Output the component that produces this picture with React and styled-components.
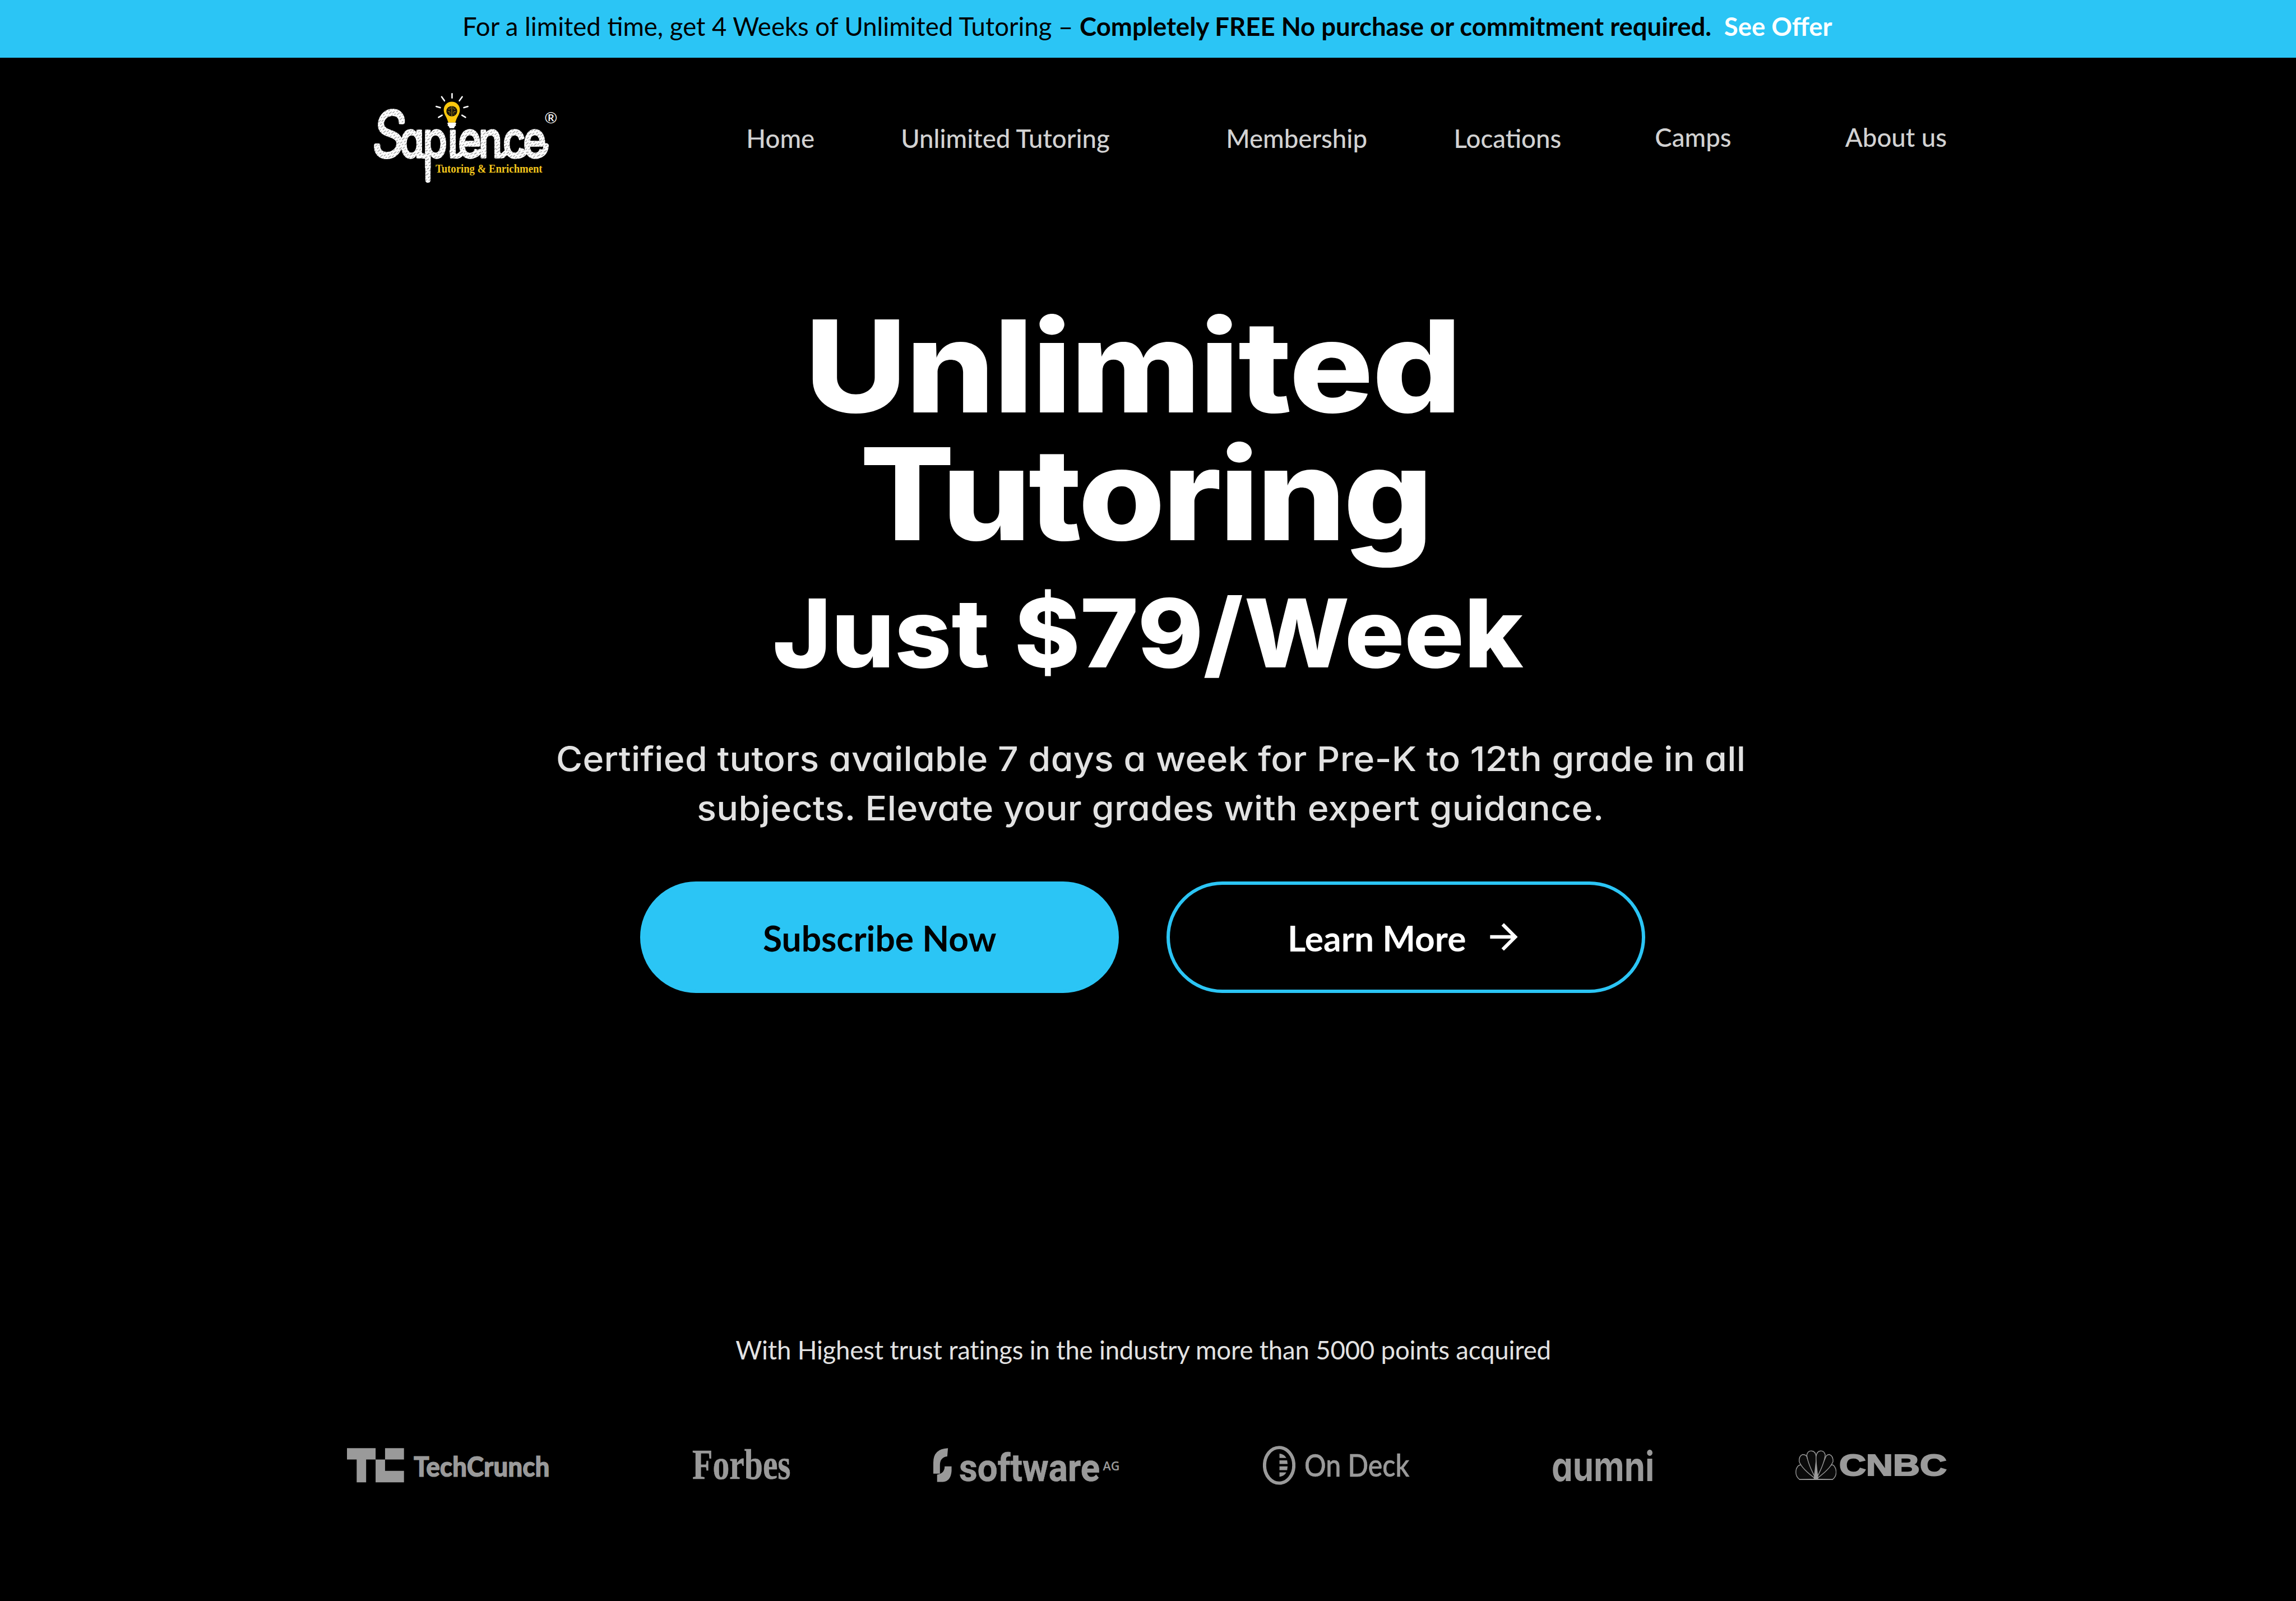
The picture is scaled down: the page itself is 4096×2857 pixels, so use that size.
import React from "react";
import styled, { createGlobalStyle } from "styled-components";

/* The design is laid out on a 4853px artboard and drawn at 0.844 scale. */
const u = (n) => `${(n * 0.84401).toFixed(2)}px`;

const CYAN = "#2bc5f5";
const GREY = "#9a9a9a";

const lato = `Lato, "Open Sans", sans-serif`;
const inter = `Inter, "Open Sans", sans-serif`;

const GlobalStyle = createGlobalStyle`
  html, body { margin: 0; padding: 0; background: #000; }
  * { box-sizing: border-box; }
`;

const Page = styled.div`
  display: flex;
  flex-direction: column;
  width: ${u(4853)};
  height: ${u(3385)};
  overflow: hidden;
  background: #000;
  font-family: ${lato};
`;

const Banner = styled.div`
  display: flex;
  align-items: center;
  flex: none;
  height: ${u(121.6)};
  padding: 0 0 ${u(11.6)} ${u(977.6)};
  background: ${CYAN};
  color: #000;
  font-size: ${u(53.9)};
  white-space: pre;
`;

const Strong = styled.strong`
  font-weight: 700;
`;

const OfferLink = styled.a`
  margin-left: ${u(27)};
  color: #fff;
  font-weight: 700;
`;

const Header = styled.header`
  display: flex;
  align-items: center;
  flex: none;
  height: ${u(341)};
  padding-left: ${u(760)};
`;

const BrandMark = styled.svg`
  flex: none;
  width: ${u(450)};
  height: ${u(230)};
  margin-top: ${u(6)};
`;

const Nav = styled.nav`
  display: grid;
  grid-template-columns: ${[326.8, 687.2, 481.5, 425.2, 402.2].map(u).join(" ")} auto;
  align-items: center;
  margin-left: ${u(367.4)};
`;

const NavLink = styled.a`
  padding-bottom: ${(p) => u(p.$lift || 0)};
  color: #d2d2d2;
  font-size: ${u(54)};
  font-weight: 500;
  white-space: nowrap;
`;

const Hero = styled.main`
  display: flex;
  flex-direction: column;
  align-items: center;
  flex: none;
`;

const Title = styled.h1`
  display: flex;
  flex-direction: column;
  align-items: center;
  margin: ${u(177.6)} 0 0;
  color: #fff;
  font-family: ${inter};
  font-weight: 800;
  font-feature-settings: "cv11" 1;
`;

const TitleLine = styled.span`
  display: flex;
  gap: ${(p) => u(p.$gap || 0)};
  margin-top: ${(p) => u(p.$top || 0)};
  margin-right: ${(p) => u(p.$right || 0)};
  font-size: ${(p) => u(p.$size)};
  line-height: ${(p) => u(p.$line)};
  letter-spacing: ${(p) => u(p.$track || 0)};
  white-space: nowrap;
  transform: scaleX(${(p) => p.$stretch});
`;

const Lead = styled.p`
  display: flex;
  flex-direction: column;
  align-items: center;
  margin: ${u(92.9)} 0 0 ${u(11)};
  color: #e2e2e2;
  font-family: ${inter};
  font-size: ${u(72)};
  font-weight: 500;
  line-height: ${u(105)};
  font-feature-settings: "cv11" 1;
`;

const LeadLine = styled.span`
  letter-spacing: ${(p) => u(p.$track)};
  white-space: nowrap;
  transform: scaleX(1.06);
`;

const Actions = styled.div`
  display: flex;
  gap: ${u(101)};
  margin: ${u(101.3)} ${u(22)} 0 0;
`;

const Button = styled.button`
  display: flex;
  align-items: center;
  justify-content: center;
  gap: ${u(35.6)};
  width: ${u(1011.6)};
  height: ${u(236)};
  padding: 0;
  border: ${u(7.2)} solid ${CYAN};
  border-radius: ${u(118)};
  background: ${(p) => (p.$filled ? CYAN : "transparent")};
  color: ${(p) => (p.$filled ? "#000" : "#fff")};
  font-family: ${lato};
  font-size: ${u(73.8)};
  font-weight: 700;
`;

const ButtonLabel = styled.span`
  padding-top: ${u(4)};
`;

const ArrowIcon = styled.svg`
  width: ${u(87.5)};
  height: ${u(87.5)};
  fill: currentColor;
`;

const Trust = styled.p`
  margin: ${u(714.5)} ${u(20)} 0 0;
  color: #e2e2e2;
  font-size: ${u(54)};
  line-height: ${u(80)};
  letter-spacing: ${u(-0.25)};
  white-space: nowrap;
`;

const LogoRow = styled.section`
  display: flex;
  justify-content: space-between;
  flex: none;
  width: ${u(3381)};
  height: ${u(105)};
  margin: ${u(146.2)} 0 0 ${u(733.8)};
  color: ${GREY};
`;

const Logo = styled.div`
  display: flex;
  flex: none;
  width: ${(p) => u(p.$w)};
  height: ${u(105)};
`;

const LogoMark = styled.svg`
  flex: none;
  width: ${(p) => u(p.$w)};
  height: ${u(105)};
  margin-right: ${(p) => u(p.$gap)};
  fill: currentColor;
`;

const Word = styled.span`
  flex: none;
  width: ${(p) => u(p.$w)};
  margin-left: ${(p) => u(p.$left || 0)};
  font-family: ${(p) => p.$font};
  font-size: ${(p) => u(p.$size)};
  font-weight: ${(p) => p.$weight};
  line-height: ${(p) => u(2 * (p.$base - p.$k * p.$size))};
  font-feature-settings: "cv11" 1;
  white-space: nowrap;
  transform: scaleX(${(p) => p.$stretch || 1});
  transform-origin: left center;
  -webkit-text-stroke: ${(p) => u(p.$stroke || 0)} currentColor;
`;

const rays = [
  [196, 18, 196, 27],
  [174, 24.5, 180, 33],
  [217.5, 24.5, 211.5, 33],
  [162.5, 45, 171, 47.5],
  [229.5, 45, 221, 47.5],
  [167.5, 68, 175, 63.5],
  [224.5, 68, 217, 63.5],
];

function SapienceLogo() {
  return (
    <BrandMark viewBox="0 0 450 230">
      <defs>
        <pattern id="chalk" width="17" height="13" patternUnits="userSpaceOnUse" patternTransform="rotate(-32)">
          <rect width="17" height="13" fill="#fff" />
          <path d="M1 2h7M10 5.500h5M3 9h4M12 11h3" stroke="#222" strokeWidth="0.8" strokeLinecap="round" />
        </pattern>
      </defs>
      <g fill="url(#chalk)" stroke="url(#chalk)" strokeLinecap="round" strokeLinejoin="round">
        <text
          transform="scale(0.8 1)"
          fontFamily="Inter, sans-serif"
          fontWeight="460"
          fontSize="104"
          strokeWidth="4"
          style={{ fontFeatureSettings: '"cv11" 1' }}
        >
          <tspan x="36" y="152" fontSize="134" fontStyle="italic" fontWeight="300" strokeWidth="7">S</tspan>
          <tspan x="107 168 234 261 315 379 433" y="153">apience</tspan>
        </text>
        <g fill="none" strokeWidth="11">
          <path d="M145 104V201" />
          <path d="M124 138q1 12 13 12M196 140q1 11 11 10q8-2 12-10M240 149q9-1 14-9M292 140q1 11 11 9l8-7M336 150q9-1 14-8M376 150q17-3 19-22" />
        </g>
      </g>
      <circle cx="195.500" cy="76" r="16" fill="#000" />
      <g stroke="#fff" strokeWidth="3" strokeLinecap="round">
        {rays.map(([x1, y1, x2, y2]) => (
          <path key={`${x1}-${y1}`} d={`M${x1} ${y1}L${x2} ${y2}`} />
        ))}
      </g>
      <path d="M195.500 35a17 17 0 0 0-17 17c0 10 6 14 9 25l1 2h14l1-2c3-11 9-15 9-25a17 17 0 0 0-17-17z" fill="#fcc80d" />
      <path d="M187 79h17l1 2-1.500 2 1 2-2.500 2-2 4h-9l-2-4-2.500-2 1-2-1.500-2z" fill="#fff" />
      <ellipse cx="195.500" cy="55" rx="11.500" ry="11" fill="#15120a" />
      <path
        d="M195.500 44v22M188 50l3 1.500M187 56h4l1 3M190 62l2-2M203 50l-3 1.500M204 56h-4l-1 3M201 62l-2-2M192 47v3M199 47v3"
        stroke="#d9ab12"
        strokeWidth="1"
        fill="none"
      />
      <text x="161" y="185" textLength="226" lengthAdjust="spacingAndGlyphs" fill="#f3c61c" fontFamily='"Liberation Serif", serif' fontWeight="700" fontSize="24">
        Tutoring &amp; Enrichment
      </text>
      <text x="405" y="80.500" textAnchor="middle" fill="#fff" fontFamily="Lato, sans-serif" fontSize="33">
        ®
      </text>
    </BrandMark>
  );
}

function PartnerLogos() {
  return (
    <LogoRow>
      <Logo $w={426.7}>
        <LogoMark $w={120.5} $gap={20.5} viewBox="0 0 120.5 105">
          <path d="M0 21.700H60.500V45.500H40.500V94H20.500V45.500H0zM80.500 21.700h40V45.500h-40zM60.500 45.500h20V69.700h40V94h-60z" />
        </LogoMark>
        <Word $w={285.7} $font={lato} $weight={900} $size={58} $k={0.387} $base={81.7} $stretch={0.938} $stroke={1.4}>TechCrunch</Word>
      </Logo>
      <Logo $w={206}>
        <Word $w={206} $font={`"Liberation Serif", serif`} $weight={700} $size={89} $k={0.3375} $base={87} $stretch={0.794} $stroke={0.8}>Forbes</Word>
      </Logo>
      <Logo $w={393.5}>
        <LogoMark $w={38.6} $gap={16.8} viewBox="0 0 38.6 105">
          <path d="M31 21.700L29.500 39Q14 41 14 57V75.500H0V52Q0 23 31 21.700z" />
          <path d="M24 60H38.600V70Q37 92 20 93H8V77.500Q24 75 24 60z" />
        </LogoMark>
        <Word $w={296} $left={-0.7} $font={`Roboto, sans-serif`} $weight={700} $size={81} $k={0.3417} $base={92} $stretch={0.932} $stroke={0.8}>software</Word>
        <Word $w={40} $left={7.5} $font={`"Open Sans", sans-serif`} $weight={600} $size={25.5} $k={0.388} $base={68.7}>AG</Word>
      </Logo>
      <Logo $w={310}>
        <LogoMark $w={68.8} $gap={19} viewBox="0 0 68.8 105">
          <ellipse cx="34.400" cy="57.900" rx="31" ry="37.600" fill="none" stroke="currentColor" strokeWidth="7" />
          <path d="M35 33.300Q45 34 49.500 42.300H35zM35 47.300H51.200L52.200 55H35zM35 60H52.200L51.200 68H35zM35 72.800H49.500Q45 81 35 82z" />
        </LogoMark>
        <Word $w={222} $font={lato} $weight={500} $size={67} $k={0.387} $base={82} $stretch={0.853} $stroke={0.8}>On Deck</Word>
      </Logo>
      <Logo $w={208.4}>
        <Word $w={208.4} $left={-3} $font={inter} $weight={700} $size={86} $k={0.3635} $base={92.7} $stretch={0.825}>aumni</Word>
      </Logo>
      <Logo $w={320.3}>
        <LogoMark $w={87.2} $gap={7.5} viewBox="0 0 87.2 105">
          <g fill="#0b0b0b" stroke="currentColor" strokeWidth="1.6" strokeLinejoin="round">
            <path d="M43.600 87L9 88Q-2 80 2 65Q6 56 13 57Q25 62 43.600 87z" />
            <path d="M43.600 87L78.200 88Q89 80 85 65Q81 56 77 57Q64 62 43.600 87z" />
            <path d="M43.600 87Q14 66 8 50Q7 38 15 35Q24 35 25 43z" />
            <path d="M43.600 87Q73 66 79.500 50Q80 38 72 35Q65 35 63 43z" />
            <path d="M43.600 87Q26 55 24 36Q26 27 34 27.500Q43 28 43.600 40z" />
            <path d="M43.600 87Q61 55 63 36Q61 27 53 27.500Q45 28 43.600 40z" />
          </g>
          <path d="M43.600 42L48.500 88H38.500zM8 87H79v1.800H8z" />
        </LogoMark>
        <Word $w={225.6} $left={-1.5} $font={`"Liberation Sans", sans-serif`} $weight={700} $size={64.5} $k={0.3465} $base={80.3} $stretch={1.22} $stroke={2.6}>CNBC</Word>
      </Logo>
    </LogoRow>
  );
}

export default function App() {
  return (
    <>
      <GlobalStyle />
      <Page>
        <Banner>
          <span>For a limited time, get 4 Weeks of Unlimited Tutoring – </span>
          <Strong>Completely FREE No purchase or commitment required.</Strong>
          <OfferLink>See Offer</OfferLink>
        </Banner>
        <Header>
          <SapienceLogo />
          <Nav>
            <NavLink>Home</NavLink>
            <NavLink>Unlimited Tutoring</NavLink>
            <NavLink>Membership</NavLink>
            <NavLink>Locations</NavLink>
            <NavLink $lift={4.6}>Camps</NavLink>
            <NavLink $lift={4.6}>About us</NavLink>
          </Nav>
        </Header>
        <Hero>
          <Title>
            <TitleLine $size={270} $line={270} $stretch={1.1} $track={-2.5} $right={64}>Unlimited</TitleLine>
            <TitleLine $size={270} $line={270} $stretch={1.1} $track={-5} $right={13}>Tutoring</TitleLine>
            <TitleLine $size={201} $line={240} $stretch={1.048} $track={-0.2} $top={38.9} $gap={50}>
              <span>Just</span>
              <span>$79/Week</span>
            </TitleLine>
          </Title>
          <Lead>
            <LeadLine $track={0.29}>Certified tutors available 7 days a week for Pre-K to 12th grade in all</LeadLine>
            <LeadLine $track={0.43}>subjects. Elevate your grades with expert guidance.</LeadLine>
          </Lead>
          <Actions>
            <Button $filled>
              <ButtonLabel>Subscribe Now</ButtonLabel>
            </Button>
            <Button>
              <ButtonLabel>Learn More</ButtonLabel>
              <ArrowIcon viewBox="0 0 24 24">
                <path d="m12 4-1.410 1.410L16.170 11H4v2h12.170l-5.580 5.590L12 20l8-8z" />
              </ArrowIcon>
            </Button>
          </Actions>
          <Trust>With Highest trust ratings in the industry more than 5000 points acquired</Trust>
        </Hero>
        <PartnerLogos />
      </Page>
    </>
  );
}
